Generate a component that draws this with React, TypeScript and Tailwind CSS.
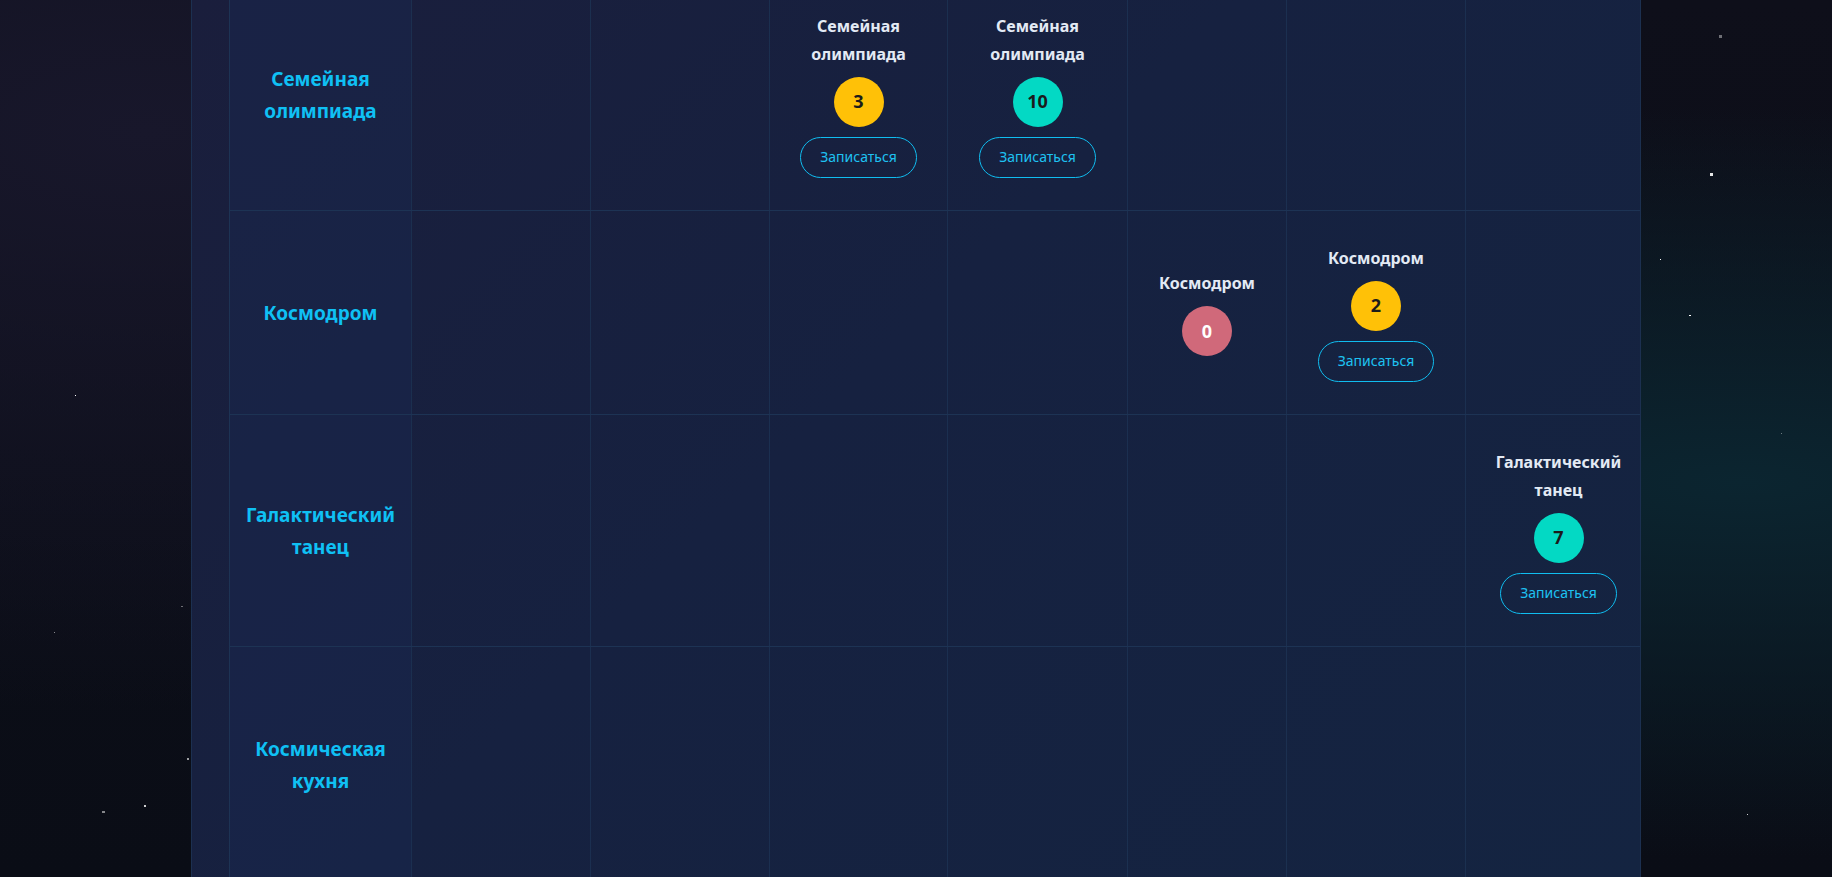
import { useMemo } from "react"

type Slot = {
    title: string
    count: number
    canJoin: boolean
}

type ScheduleRow = {
    name: string
    height: string
    slots: (Slot | null)[]
}

const FONT = "font-['Noto_Sans','Open_Sans',sans-serif]"

const rows: ScheduleRow[] = [
    {
        name: 'Семейная олимпиада',
        height: 'h-[232px]',
        slots: [null, null, { title: 'Семейная олимпиада', count: 3, canJoin: true }, { title: 'Семейная олимпиада', count: 10, canJoin: true }, null, null, null],
    },
    {
        name: 'Космодром',
        height: 'h-[204px]',
        slots: [null, null, null, null, { title: 'Космодром', count: 0, canJoin: false }, { title: 'Космодром', count: 2, canJoin: true }, null],
    },
    {
        name: 'Галактический танец',
        height: 'h-[232px]',
        slots: [null, null, null, null, null, null, { title: 'Галактический танец', count: 7, canJoin: true }],
    },
    {
        name: 'Космическая кухня',
        height: 'h-[236px]',
        slots: [null, null, null, null, null, null, null],
    },
]

const stars = [
    { x: 'left-[75px]', y: 'top-[395px]', size: 'w-px h-px', tone: 'bg-white' },
    { x: 'left-[181px]', y: 'top-[606px]', size: 'w-[2px] h-px', tone: 'bg-white/40' },
    { x: 'left-[54px]', y: 'top-[632px]', size: 'w-px h-px', tone: 'bg-white/50' },
    { x: 'left-[187px]', y: 'top-[758px]', size: 'w-[2px] h-[2px]', tone: 'bg-white/60' },
    { x: 'left-[102px]', y: 'top-[811px]', size: 'w-[3px] h-[2px]', tone: 'bg-white/50' },
    { x: 'left-[144px]', y: 'top-[805px]', size: 'w-[2px] h-[2px]', tone: 'bg-white/80' },
    { x: 'left-[1719px]', y: 'top-[35px]', size: 'w-[3px] h-[3px]', tone: 'bg-white/40' },
    { x: 'left-[1710px]', y: 'top-[173px]', size: 'w-[3px] h-[3px]', tone: 'bg-white/90' },
    { x: 'left-[1660px]', y: 'top-[259px]', size: 'w-px h-px', tone: 'bg-white' },
    { x: 'left-[1689px]', y: 'top-[315px]', size: 'w-[2px] h-px', tone: 'bg-white' },
    { x: 'left-[1781px]', y: 'top-[433px]', size: 'w-px h-px', tone: 'bg-white/40' },
    { x: 'left-[1747px]', y: 'top-[814px]', size: 'w-px h-px', tone: 'bg-white/80' },
]

function badgeColor(count: number) {
    if (count === 0) return 'bg-[#d0697a] text-white'
    if (count < 5) return 'bg-[#ffc107] text-[#1b1b1b]'
    return 'bg-[#03d9c4] text-[#1b1b1b]'
}

function SlotCard({ slot }: { slot: Slot }) {
    const color = useMemo(() => badgeColor(slot.count), [slot.count])

    return (
        <div className="flex flex-col items-center">
            <p className="text-[16px] font-bold leading-[28px] text-[#e3eaf4] text-center">
                {slot.title}
            </p>
            <div className={`${color} mt-[9px] w-[50px] h-[50px] rounded-full flex items-center justify-center text-[18px] font-bold`}>
                {slot.count}
            </div>
            {slot.canJoin && (
                <button
                    type="button"
                    className="mt-[10px] h-[41px] px-[19px] rounded-full border border-[#10bdf0] text-[#1ec2f2] text-[14px] leading-none"
                >
                    Записаться
                </button>
            )}
        </div>
    )
}

export default function App() {
    return (
        <div className={`${FONT} relative h-[877px] w-full overflow-hidden bg-[radial-gradient(ellipse_at_8%_15%,#18172b_0%,transparent_55%),radial-gradient(ellipse_at_95%_55%,#0b2530_0%,transparent_55%),linear-gradient(180deg,#0e0f1a,#0a0d16)]`}>
            {stars.map((star, i) => (
                <span key={i} className={`absolute ${star.x} ${star.y} ${star.size} ${star.tone}`} />
            ))}

            <div className="mx-auto h-full w-[1450px] overflow-hidden border-x border-[#1c3050] bg-[linear-gradient(135deg,#1a1e3c_0%,#162140_45%,#142441_100%)] pl-[37px]">
                <div className="-mt-[21px] w-[1422px]">
                    {rows.map((row) => (
                        <div
                            key={row.name}
                            className={`${row.height} grid grid-cols-[182px_179px_179px_178px_180px_159px_179px_186px] border-b border-[#1d3354]`}
                        >
                            <div className="flex items-center justify-center border-l border-[#1d3354] bg-[#1b2b55]/35 px-5">
                                <p className="text-center text-[19px] font-bold leading-[32px] text-[#0fc0f4]">
                                    {row.name}
                                </p>
                            </div>
                            {row.slots.map((slot, i) => (
                                <div
                                    key={i}
                                    className="flex items-center justify-center border-l border-[#1d3354]/80 px-4"
                                >
                                    {slot && <SlotCard slot={slot} />}
                                </div>
                            ))}
                        </div>
                    ))}
                </div>
            </div>
        </div>
    )
}
